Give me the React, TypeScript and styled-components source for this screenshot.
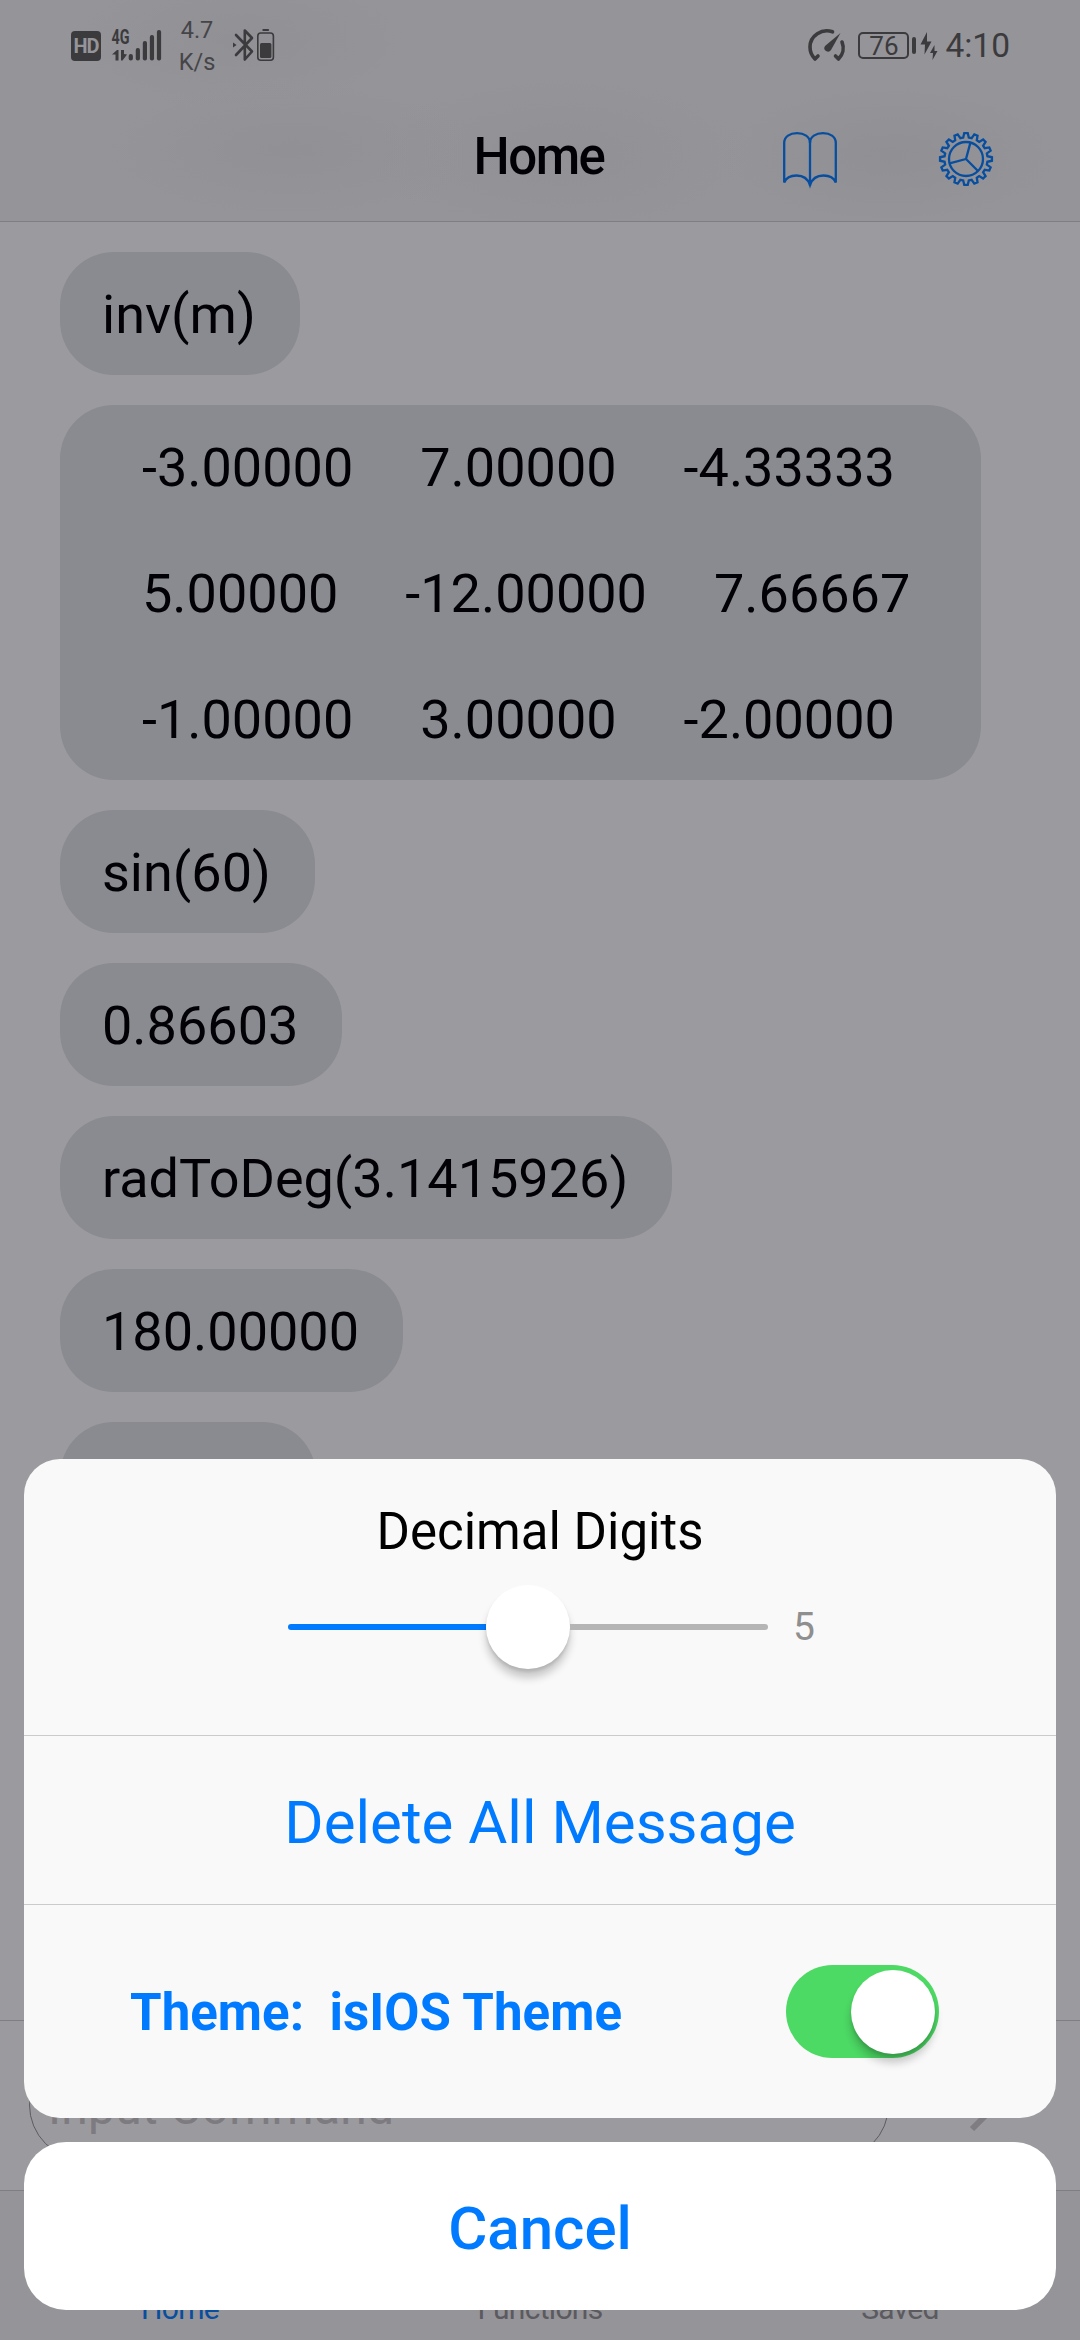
import React from "react";
import styled, { createGlobalStyle } from "styled-components";

const GlobalStyle = createGlobalStyle`
  * { box-sizing: border-box; }
  html, body { margin: 0; padding: 0; background: #9b9a9f; }
  body { font-family: Roboto, "Noto Sans", sans-serif; }
`;

const ink = "#3b3b3d";
const dimBlue = "#084e9f";
const blue = "#007aff";
const hairline = "#7f7e83";

const Screen = styled.div`
  position: relative;
  display: flex;
  flex-direction: column;
  width: 1080px;
  height: 2340px;
  overflow: hidden;
  background: #9b9a9f;
  color: #020206;
`;

const Header = styled.header`
  flex: none;
  height: 222px;
  display: flex;
  flex-direction: column;
  border-bottom: 1px solid ${hairline};
  background:
    radial-gradient(ellipse 190px 70px at 290px 150px, #909095 0%, rgba(144, 144, 149, 0) 100%),
    radial-gradient(ellipse 190px 80px at 560px 155px, #909095 0%, rgba(144, 144, 149, 0) 100%),
    radial-gradient(ellipse 170px 70px at 890px 155px, #8f8f94 0%, rgba(144, 144, 149, 0) 100%),
    radial-gradient(ellipse 170px 70px at 240px 40px, #909095 0%, rgba(144, 144, 149, 0) 100%),
    #959499;
`;

const StatusBar = styled.div`
  height: 90px;
  padding: 0 70px 0 71px;
  display: flex;
  justify-content: space-between;
  align-items: center;
  color: ${ink};
`;

const StatusGroup = styled.div`
  display: flex;
  align-items: center;
  height: 90px;
`;

const Glyph = styled.svg<{ $gap?: number }>`
  display: block;
  flex: none;
  margin-left: ${(p) => p.$gap ?? 0}px;
  overflow: visible;
`;

const HdBadge = styled.div`
  width: 30px;
  height: 30px;
  margin-top: 2px;
  border-radius: 4px;
  background: ${ink};
  color: #959499;
  font-size: 20px;
  font-weight: 700;
  line-height: 30px;
  display: flex;
  justify-content: center;
  letter-spacing: -1px;
`;

const NetSpeed = styled.div`
  width: 48px;
  margin-left: 12px;
  font-size: 23.5px;
  line-height: 32px;
  text-align: center;
  padding-top: 1px;
  color: #454548;
`;

const BatteryBox = styled.div`
  width: 51px;
  height: 27px;
  margin: 1px 0 0 12px;
  border: 2px solid ${ink};
  border-radius: 5px;
  font-size: 26px;
  font-weight: 400;
  line-height: 24px;
  text-align: center;
`;

const BatteryNub = styled.div`
  width: 4px;
  height: 17px;
  margin-left: 3px;
  border-radius: 2px;
  background: ${ink};
`;

const Clock = styled.div`
  margin-left: 7px;
  padding-top: 2px;
  font-size: 33.5px;
  line-height: 40px;
`;

const NavBar = styled.div`
  flex: 1;
  padding: 7px 87px 0;
  display: grid;
  grid-template-columns: 1fr auto 1fr;
  align-items: center;
`;

const NavTitle = styled.h1`
  grid-column: 2;
  margin: 0;
  padding: 0 2px 4px 0;
  font-size: 51px;
  line-height: 60px;
  font-weight: 500;
  letter-spacing: -1.5px;
`;

const NavActions = styled.div`
  display: flex;
  justify-content: flex-end;
  gap: 102px;
`;

const Messages = styled.main`
  flex: 1;
  min-height: 0;
  overflow: hidden;
  padding: 30px 60px 0;
  display: flex;
  flex-direction: column;
  align-items: flex-start;
  gap: 30px;
`;

const Bubble = styled.div<{ $width?: number }>`
  flex: none;
  width: ${(p) => (p.$width ? `${p.$width}px` : "auto")};
  padding: 31px 44px 29px 42px;
  border-radius: 54px;
  background: #8a8b90;
  font-size: 54px;
  line-height: 63px;
  white-space: pre;
`;

const MatrixRow = styled.div`
  padding-left: 40px;
  display: flex;
  gap: 67px;

  & + & { margin-top: 63px; }
`;

const InputBar = styled.div`
  flex: none;
  height: 170px;
  border-top: 1px solid ${hairline};
  padding: 29px 72px 30px 29px;
  display: flex;
  justify-content: space-between;
  align-items: center;
`;

const InputField = styled.div`
  width: 860px;
  height: 110px;
  padding: 24px 18px 18px;
  border: 1px solid #5c5b60;
  border-radius: 60px;
  color: #7d7b80;
  font-size: 48px;
  line-height: 66px;
  letter-spacing: 0.25px;
`;

const TabBar = styled.nav`
  flex: none;
  height: 150px;
  border-top: 1px solid ${hairline};
  background: #959499;
  display: grid;
  grid-template-columns: repeat(3, 1fr);
  align-items: end;
  padding-bottom: 13px;
`;

const Tab = styled.div<{ $active?: boolean }>`
  text-align: center;
  font-size: 30px;
  line-height: 36px;
  letter-spacing: -0.7px;
  color: ${(p) => (p.$active ? dimBlue : "#5b5a5f")};
`;

const Sheet = styled.div`
  position: absolute;
  left: 24px;
  right: 24px;
  bottom: 30px;
  display: flex;
  flex-direction: column;
  gap: 24px;
`;

const Card = styled.section`
  height: 659px;
  border-radius: 36px;
  background: #f9f9f9;
  display: flex;
  flex-direction: column;
`;

const DigitsRow = styled.div`
  height: 277px;
  padding-top: 43px;
  border-bottom: 1px solid #cbcbcd;
  color: #000;
`;

const DigitsTitle = styled.div`
  font-size: 51px;
  line-height: 60px;
  text-align: center;
`;

const SliderLine = styled.div`
  margin: 23px 0 0 264px;
  display: flex;
  align-items: center;
  height: 84px;
`;

const Track = styled.div`
  width: 480px;
  height: 6px;
  display: flex;
  align-items: center;
`;

const TrackPart = styled.div<{ $filled?: boolean }>`
  flex: 1;
  height: 6px;
  border-radius: ${(p) => (p.$filled ? "3px 0 0 3px" : "0 3px 3px 0")};
  background: ${(p) => (p.$filled ? blue : "#b5b5b5")};
`;

const Thumb = styled.div`
  flex: none;
  width: 84px;
  height: 84px;
  border-radius: 50%;
  background: #fff;
  box-shadow: 0 9px 9px rgba(0, 0, 0, 0.2), 0 3px 3px rgba(0, 0, 0, 0.1);
`;

const DigitsValue = styled.div`
  margin-left: 25px;
  font-size: 39px;
  line-height: 46px;
  color: #8f8f8f;
`;

const DeleteRow = styled.div`
  height: 169px;
  border-bottom: 1px solid #cbcbcd;
  color: ${blue};
  font-size: 60px;
  line-height: 174px;
  text-align: center;
`;

const ThemeRow = styled.div`
  flex: 1;
  padding: 0 117px 0 106px;
  display: flex;
  justify-content: space-between;
  align-items: center;
`;

const ThemeLabel = styled.div`
  padding-top: 2px;
  color: ${blue};
  font-size: 51px;
  line-height: 60px;
  font-weight: 700;
  letter-spacing: 0.05px;
  white-space: pre;
`;

const Switch = styled.div`
  width: 153px;
  height: 93px;
  padding-right: 4px;
  border-radius: 47px;
  background: #4cd964;
  display: flex;
  justify-content: flex-end;
  align-items: center;
`;

const Cancel = styled.div`
  height: 168px;
  border-radius: 42px;
  background: #fff;
  color: ${blue};
  font-size: 60px;
  line-height: 174px;
  font-weight: 500;
  text-align: center;
`;

const matrix = [
  ["-3.00000", "7.00000", "-4.33333"],
  ["5.00000", "-12.00000", "7.66667"],
  ["-1.00000", "3.00000", "-2.00000"],
];

const gearOutline = (() => {
  const teeth = 16;
  const step = (Math.PI * 2) / teeth;
  const pts: string[] = [];
  for (let i = 0; i < teeth; i++) {
    const a = i * step - Math.PI / 2;
    const corners: [number, number][] = [
      [21.6, a - step * 0.33],
      [26, a - step * 0.17],
      [26, a + step * 0.17],
      [21.6, a + step * 0.33],
    ];
    corners.forEach(([r, t]) => pts.push(`${(27 + r * Math.cos(t)).toFixed(2)} ${(27 + r * Math.sin(t)).toFixed(2)}`));
  }
  return `M${pts.join("L")}Z`;
})();

function Signal() {
  return (
    <Glyph $gap={10} width="50" height="34" viewBox="111 28 50 34" fill={ink}>
      <text x="111.5" y="43.5" fontSize="19.5" fontWeight="700" textLength="18" lengthAdjust="spacingAndGlyphs">4G</text>
      <path d="M112 54.5L117 50H118.500V60.500H115.500V54.500Z" />
      <path d="M121 50H124L124 54L127 54.500L122.500 60.500H121Z" />
      {[54, 48, 41, 35, 30].map((y, i) => (
        <rect key={y} x={128.7 + i * 7.05} y={y} width="4.2" height={60.5 - y} rx="2" />
      ))}
    </Glyph>
  );
}

function Bluetooth() {
  return (
    <Glyph $gap={12} width="42" height="34" viewBox="233 28 42 34" fill="none" stroke={ink} strokeWidth="2.6" strokeLinejoin="round" strokeLinecap="round">
      <path d="M236 35L252 51.500L244.800 59.500V30.500L252 38L236 55" />
      <path d="M233 42.500L236.500 45L233 47.500Z" fill={ink} stroke="none" />
      <rect x="257.8" y="33" width="15.6" height="27.3" rx="3" strokeWidth="1.6" />
      <rect x="260" y="43" width="11.4" height="15" rx="1.5" fill={ink} stroke="none" />
      <rect x="262.3" y="29" width="6.8" height="2" rx="1" fill={ink} stroke="none" />
    </Glyph>
  );
}

function Gauge() {
  return (
    <Glyph width="38" height="34" viewBox="807 28 38 34" fill="none" stroke={ink} strokeWidth="3.6" strokeLinecap="round" strokeLinejoin="round">
      <path d="M831.500 31.800C821 28 809 35.500 809 47C809 52 811 56 814 59L817 56" />
      <path d="M841 42C843.500 48 842 54.500 837.500 59L834.500 56" />
      <path d="M839.500 33L830 50A3.500 3.500 0 1 1 824 46Z" fill={ink} stroke="none" />
    </Glyph>
  );
}

function Bolts() {
  return (
    <Glyph $gap={4} width="18" height="30" viewBox="919 30 18 30" fill={ink}>
      <path d="M926 32L919.500 44.500H924L923.500 54.500L930.500 41.500H926Z" />
      <path d="M933.500 45L929 53H932L931.500 60L936.500 51H933.500Z" />
    </Glyph>
  );
}

function BookIcon() {
  return (
    <Glyph width="54" height="54" viewBox="0 0 54 54" fill="none" stroke={dimBlue} strokeWidth="2.3">
      <path d="M1.200 50.500V11C1.200 4.500 7 1.200 14 1.200C21 1.200 27 4.500 27 11C27 4.500 33 1.200 40 1.200C47 1.200 52.800 4.500 52.800 11V50.500C51 46 46 43.500 40.500 43.500C34 43.500 29 47 27 53C25 47 20 43.500 13.500 43.500C8 43.500 3 46 1.200 50.500Z" />
      <path d="M27 9V54" />
    </Glyph>
  );
}

function GearIcon() {
  return (
    <Glyph width="54" height="54" viewBox="0 0 54 54" fill="none" stroke={dimBlue} strokeWidth="2.3">
      <path d={gearOutline} />
      <circle cx="27" cy="27" r="17" />
      <path d="M27 27L31.400 10.600M27 27L10.600 31.400M27 27L39 39" />
    </Glyph>
  );
}

export default function App() {
  return (
    <Screen>
      <GlobalStyle />
      <Header>
        <StatusBar>
          <StatusGroup>
            <HdBadge>HD</HdBadge>
            <Signal />
            <NetSpeed>4.7<br />K/s</NetSpeed>
            <Bluetooth />
          </StatusGroup>
          <StatusGroup>
            <Gauge />
            <BatteryBox>76</BatteryBox>
            <BatteryNub />
            <Bolts />
            <Clock>4:10</Clock>
          </StatusGroup>
        </StatusBar>
        <NavBar>
          <NavTitle>Home</NavTitle>
          <NavActions>
            <BookIcon />
            <GearIcon />
          </NavActions>
        </NavBar>
      </Header>

      <Messages>
        <Bubble>inv(m)</Bubble>
        <Bubble $width={921}>
          {matrix.map((row) => (
            <MatrixRow key={row[0]}>
              {row.map((cell) => <span key={cell}>{cell}</span>)}
            </MatrixRow>
          ))}
        </Bubble>
        <Bubble>sin(60)</Bubble>
        <Bubble>0.86603</Bubble>
        <Bubble>radToDeg(3.1415926)</Bubble>
        <Bubble>180.00000</Bubble>
        <Bubble $width={256}>sin(30)</Bubble>
      </Messages>

      <InputBar>
        <InputField>Input Command</InputField>
        <Glyph width="40" height="60" viewBox="0 0 40 60" fill="none" stroke="#7f7d82" strokeWidth="6">
          <path d="M4 54L28 30L4 6" />
        </Glyph>
      </InputBar>
      <TabBar>
        <Tab $active>Home</Tab>
        <Tab>Functions</Tab>
        <Tab>Saved</Tab>
      </TabBar>

      <Sheet>
        <Card>
          <DigitsRow>
            <DigitsTitle>Decimal Digits</DigitsTitle>
            <SliderLine>
              <Track>
                <TrackPart $filled />
                <Thumb />
                <TrackPart />
              </Track>
              <DigitsValue>5</DigitsValue>
            </SliderLine>
          </DigitsRow>
          <DeleteRow>Delete All Message</DeleteRow>
          <ThemeRow>
            <ThemeLabel>{"Theme:  isIOS Theme"}</ThemeLabel>
            <Switch><Thumb /></Switch>
          </ThemeRow>
        </Card>
        <Cancel>Cancel</Cancel>
      </Sheet>
    </Screen>
  );
}
